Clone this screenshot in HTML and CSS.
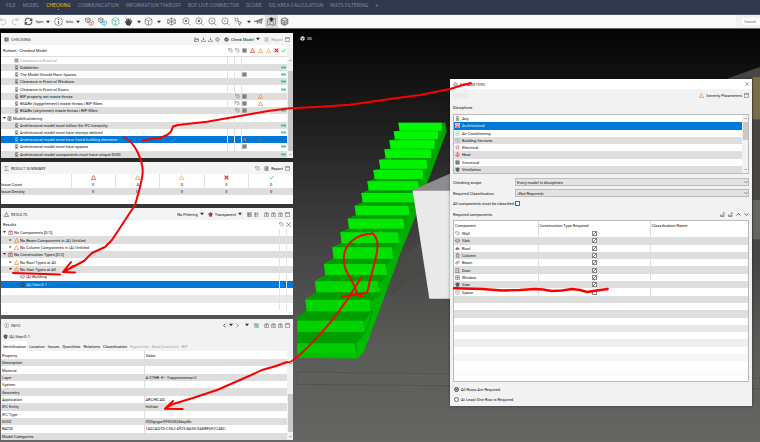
FILE: index.html
```html
<!DOCTYPE html>
<html lang="en">
<head>
<meta charset="utf-8">
<title>Model Checking</title>
<link rel="stylesheet" href="styles.css">
</head>
<body>
<svg class="defs" aria-hidden="true">
  <defs>
    <symbol id="undo" viewBox="0 0 16 16"><path d="M4 1v5h5M4 6c2-4 10-3 10 3 0 4-5 6-8 4"/></symbol>
    <symbol id="redo" viewBox="0 0 16 16"><path d="M12 1v5H7M12 6C10 2 2 3 2 9c0 4 5 6 8 4"/></symbol>
    <symbol id="spin" viewBox="0 0 16 16"><path d="M2 8c0-6 8-8 11-3M14 8c0 6-8 8-11 3M14 2v4h-4M2 14v-4h4" stroke-width="1.8"/></symbol>
    <symbol id="info" viewBox="0 0 16 16"><circle cx="8" cy="8" r="7"/><path d="M8 7v5M8 3.500v2" stroke-width="2"/></symbol>
    <symbol id="cube" viewBox="0 0 16 16"><path class="tint" d="M8 1l6 3v8l-6 3-6-3V4zM2 4l6 3 6-3M8 7v8"/></symbol>
    <symbol id="cubes" viewBox="0 0 16 16"><path d="M5 1l4 2v5L5 10 1 8V3zM1 3l4 2 4-2M5 5v5"/><path class="tint" d="M11 6l4 2v5l-4 2-4-2V8zM7 8l4 2 4-2M11 10v5"/></symbol>
    <symbol id="hand" viewBox="0 0 16 16"><path d="M5 14L2 8l3 1-1-6 3 5V2l2 6 2-5v6l3-3-2 6-2 3z" fill="#444" stroke="#333"/></symbol>
    <symbol id="section" viewBox="0 0 16 16"><path d="M1 5l7-3 7 3v6l-7 3-7-3zM1 5l7 3 7-3M8 1v14M1 11l7-3 7 3"/></symbol>
    <symbol id="zoom" viewBox="0 0 16 16"><circle cx="7" cy="7" r="5.500"/><path d="M11 11l4 4"/><path d="M7 5v4M5 7h4" stroke-width="2"/></symbol>
    <symbol id="zoomout" viewBox="0 0 16 16"><circle cx="7" cy="7" r="5.500"/><path d="M11 11l4 4M5 7h4"/></symbol>
    <symbol id="pick" viewBox="0 0 16 16"><path d="M2 2h5v5H2zM7 7l7 3-3 1-1 4z"/></symbol>
    <symbol id="plane" viewBox="0 0 16 16"><path d="M0 8l15-5-2 9-4-3-3 3V8zM6 8l9-5" fill="#aaa"/></symbol>
    <symbol id="map" viewBox="0 0 16 16"><path d="M1 4l4-2 6 2 4-2v11l-4 2-6-2-4 2zM5 2v11M11 4v11"/><path d="M8 9L5.500 5a2.800 2.800 0 1 1 5 0z" fill="#222"/></symbol>
    <symbol id="layers" viewBox="0 0 16 16"><path d="M2 4l6-3 6 3v8l-6 3-6-3zM2 4l6 3 6-3M2 7l6 3 6-3M2 10l6 3 6-3M8 7v8" fill="#bbb"/></symbol>
    <symbol id="caret" viewBox="0 0 10 10"><path d="M0 2h10L5 8z" fill="currentColor" stroke="none"/></symbol>
    <symbol id="right" viewBox="0 0 10 10"><path d="M2 1v8l6-4z" fill="currentColor" stroke="none"/></symbol>
    <symbol id="para" viewBox="0 0 16 16"><path d="M12 4c0-4-7-4-7-1s7 3 7 6-7 4-7 0M5 6c-2 4 6 5 6 8s-6 2-7-1" stroke-width="2.400"/></symbol>
    <symbol id="grid" viewBox="0 0 16 16"><path d="M2 2h12v12H2z" fill="#999"/><path d="M2 6h12M2 10h12M6 2v12" /></symbol>
    <symbol id="tag" viewBox="0 0 16 16"><path d="M2 2h5l7 8-4 4-8-7zM10 2l4 3" stroke-width="1.600"/></symbol>
    <symbol id="warn" viewBox="0 0 16 16"><path d="M8 1.500L14.500 14h-13zM3 14v1.500M13 14v1.500" stroke-width="2"/></symbol>
    <symbol id="cross" viewBox="0 0 16 16"><path d="M2 2l12 12M14 2L2 14" stroke-width="3.500"/></symbol>
    <symbol id="close" viewBox="0 0 16 16"><path d="M1 1l14 14M15 1L1 15" stroke-width="2"/></symbol>
    <symbol id="tick" viewBox="0 0 16 16"><path d="M1 8l5 5 9-10" stroke-width="2.400"/></symbol>
    <symbol id="pass" viewBox="0 0 16 10"><path d="M0 5l4-3v6zM16 5l-4-3v6zM4 5h8M7 2v6M10 2v6" fill="currentColor" stroke-width="2"/></symbol>
    <symbol id="window" viewBox="0 0 16 16"><path d="M1 2h14v12H1zM1 4h14" stroke-width="1.600"/></symbol>
    <symbol id="report" viewBox="0 0 16 16"><path d="M3 2h6v3h4v9H3zM5 8h6M5 11h6M14 1L9 7" stroke-width="2"/></symbol>
    <symbol id="folder" viewBox="0 0 16 16"><path d="M1 14V3h5l2 2h5v3M1 14l3-6h12l-3 6z" stroke-width="1.800"/></symbol>
    <symbol id="load" viewBox="0 0 16 16"><path d="M8 1v8M5 6l3 3 3-3M1 10v4h14v-4" stroke-width="1.800"/></symbol>
    <symbol id="gear" viewBox="0 0 16 16"><circle cx="8" cy="8" r="6"/><circle cx="8" cy="8" r="3"/><path d="M8 0v4M8 12v4M0 8h4M12 8h4M3 3l2 2M11 11l2 2M13 3l-2 2M5 11l-2 2"/></symbol>
    <symbol id="check" viewBox="0 0 16 16"><circle cx="8" cy="8" r="6.500" fill="#3d5878"/><path d="M4 8l3 3 5-6" stroke="#fff" stroke-width="2"/></symbol>
    <symbol id="sigma" viewBox="0 0 16 16"><path d="M13 4V1H2l6 7-6 7h11v-3" stroke-width="1.600"/></symbol>
    <symbol id="case" viewBox="0 0 16 16"><path d="M1 5h14v9H1zM5 5V2h6v3M8 7v5M5.500 9.500h5" stroke-width="1.500"/></symbol>
    <symbol id="tree" viewBox="0 0 16 16"><path d="M3 1v13h4M3 4h4M3 9h4M8 3h6M8 8h6M8 13h6" stroke-width="2"/></symbol>
    <symbol id="stair" viewBox="0 0 16 16"><path d="M8 1l3 3 4 1-2 4-1 5H5L4 10 1 6l4-2z" fill="#444"/><path d="M5 8h7M8 3v9" stroke="#999"/></symbol>
    <symbol id="orbit" viewBox="0 0 16 16"><path d="M8 1l6 3v8l-6 3-6-3V4z" fill="#eee"/><path d="M2 5l6 4 6-4M8 9v5" stroke="#111" stroke-width="2"/></symbol>
    <symbol id="house" viewBox="0 0 16 16"><path d="M1 8l7-6 7 6M3 7v7h10V7M7 14v-4h2v4" stroke-width="1.600"/></symbol>
    <symbol id="fan" viewBox="0 0 16 16"><path d="M1 3h14M1 8h14M1 13h14M4 1v14M11 1v14"/></symbol>
    <symbol id="flame" viewBox="0 0 16 16"><path d="M8 1c1 4 5 5 5 9s-9 6-10 1c0-3 3-3 5-10zM8 9v5" stroke-width="2"/></symbol>
    <symbol id="slab" viewBox="0 0 16 16"><path d="M1 7l7-4 7 4-7 4zM1 7v3l7 4 7-4V7" stroke-width="1.600"/></symbol>
    <symbol id="roof" viewBox="0 0 16 16"><path d="M1 11l5-7 4 2 5 5-5-1-3 2z" fill="#777"/></symbol>
    <symbol id="column" viewBox="0 0 16 16"><path d="M5 4v10h7V4zM5 4c0-3 7-3 7 0" stroke-width="1.600"/></symbol>
    <symbol id="beam" viewBox="0 0 16 16"><path d="M1 11l10-7 4 2-9 7-5-2zM3 7l6-1" stroke-width="1.600"/></symbol>
    <symbol id="door" viewBox="0 0 16 16"><path d="M3 15V1h9v14M1 15h14M10 7v3" stroke-width="1.600"/></symbol>
    <symbol id="pane" viewBox="0 0 16 16"><path d="M2 2h12v12H2zM8 2v12M2 8h12" stroke-width="1.600"/></symbol>
    <symbol id="rows" viewBox="0 0 16 16"><path d="M1 10h12v4H1z" stroke-width="2"/><path class="tint" d="M9 4h6M12 1v6" stroke-width="2.600"/></symbol>
    <symbol id="up" viewBox="0 0 16 16"><path d="M2 11l6-6 6 6" stroke-width="3"/></symbol>
    <symbol id="down" viewBox="0 0 16 16"><path d="M2 5l6 6 6-6" stroke-width="3"/></symbol>
    <symbol id="prev" viewBox="0 0 16 16"><path d="M11 2L5 8l6 6" stroke-width="3"/></symbol>
    <symbol id="next" viewBox="0 0 16 16"><path d="M5 2l6 6-6 6" stroke-width="2"/></symbol>
  </defs>
</svg>

<nav class="menu">
  <a href="#">FILE</a><a href="#">MODEL</a><a href="#" class="on">CHECKING</a><a href="#">COMMUNICATION</a><a href="#">INFORMATION TAKEOFF</a><a href="#">BCF LIVE CONNECTOR</a><a href="#">SCORE</a><a href="#">SIS AREA CALCULATION</a><a href="#">MATS FILTERING</a><a href="#">+</a>
</nav>

<div class="toolbar">
  <button class="dim" aria-label="Undo"><svg><use href="#undo"/></svg></button>
  <button class="dim" aria-label="Redo"><svg><use href="#redo"/></svg></button>
  <button class="wide"><svg><use href="#spin"/></svg>Spin<svg class="caret"><use href="#caret"/></svg></button>
  <button class="wide"><svg><use href="#info"/></svg>Info<svg class="caret"><use href="#caret"/></svg></button>
  <button class="t-red" aria-label="Hide"><svg><use href="#cubes"/></svg></button>
  <button class="t-blue" aria-label="Show"><svg><use href="#cubes"/></svg></button>
  <button class="t-teal" aria-label="Isolate"><svg><use href="#cube"/></svg></button>
  <button class="drop" aria-label="Pan"><svg><use href="#hand"/></svg><svg class="caret"><use href="#caret"/></svg></button>
  <button class="drop" aria-label="View"><svg><use href="#cube"/></svg><svg class="caret"><use href="#caret"/></svg></button>
  <button class="broad" aria-label="Section"><svg><use href="#section"/></svg></button>
  <button aria-label="Zoom window"><svg><use href="#zoom"/></svg></button>
  <button aria-label="Zoom in"><svg><use href="#zoom"/></svg></button>
  <button aria-label="Zoom out"><svg><use href="#zoomout"/></svg></button>
  <button aria-label="Zoom all"><svg><use href="#zoomout"/></svg></button>
  <button class="drop" aria-label="Select"><svg><use href="#pick"/></svg><svg class="caret"><use href="#caret"/></svg></button>
  <button aria-label="Plane"><svg><use href="#plane"/></svg></button>
  <button class="active" aria-label="Map"><svg><use href="#map"/></svg></button>
  <button aria-label="Layers"><svg><use href="#layers"/></svg></button>
  <div class="search"><input type="text" placeholder="Search" aria-label="Search"></div>
</div>

<main class="workspace">
  <div class="side">
    <section class="panel">
      <header class="bar"><svg><use href="#grid"/></svg><h2>CHECKING</h2>
        <div class="tools"><svg><use href="#folder"/></svg><svg><use href="#load"/></svg><svg><use href="#load"/></svg><svg><use href="#gear"/></svg><button><svg><use href="#check"/></svg>Check Model <svg class="caret"><use href="#caret"/></svg></button><button class="dim"><svg><use href="#report"/></svg>Report</button><svg><use href="#window"/></svg></div>
      </header>
      <div class="scroller">
        <table class="rules">
          <thead><tr><th>Ruleset - Checked Model</th><th class="c7"><svg><use href="#tag"/></svg></th><th class="c7"><svg><use href="#tag"/></svg></th><th class="c7"><svg><use href="#grid"/></svg></th><th class="c8 red"><svg><use href="#warn"/></svg></th><th class="c8 orange"><svg><use href="#warn"/></svg></th><th class="c8 amber"><svg><use href="#warn"/></svg></th><th class="c8 red"><svg><use href="#cross"/></svg></th><th class="c7 green"><svg><use href="#tick"/></svg></th></tr></thead>
          <tbody>
            <tr class="faint"><td><svg><use href="#grid"/></svg>Clearance in Front of</td><td></td><td></td><td></td><td></td><td></td><td></td><td></td><td></td></tr>
            <tr><td><svg><use href="#para"/></svg>Dubbletter</td><td></td><td></td><td></td><td></td><td></td><td></td><td></td><td class="green"><svg><use href="#pass"/></svg></td></tr>
            <tr><td><svg><use href="#para"/></svg>The Model Should Have Spaces</td><td></td><td></td><td><svg><use href="#grid"/></svg></td><td></td><td></td><td></td><td></td><td class="green"><svg><use href="#pass"/></svg></td></tr>
            <tr><td><svg><use href="#para"/></svg>Clearance in Front of Windows</td><td></td><td></td><td></td><td></td><td></td><td></td><td></td><td class="green"><svg><use href="#pass"/></svg></td></tr>
            <tr><td><svg><use href="#para"/></svg>Clearance in Front of Doors</td><td></td><td></td><td></td><td></td><td></td><td></td><td></td><td class="green"><svg><use href="#pass"/></svg></td></tr>
            <tr><td><svg><use href="#para"/></svg>BIP property set måste finnas</td><td></td><td><svg><use href="#tag"/></svg></td><td><svg><use href="#grid"/></svg></td><td></td><td class="orange"><svg><use href="#warn"/></svg></td><td></td><td></td><td></td></tr>
            <tr><td><svg><use href="#para"/></svg>BSABe (byggelement) måste finnas i BIP-fliken</td><td></td><td><svg><use href="#tag"/></svg></td><td><svg><use href="#grid"/></svg></td><td></td><td class="orange"><svg><use href="#warn"/></svg></td><td></td><td></td><td></td></tr>
            <tr><td><svg><use href="#para"/></svg>BSABs (utrymmen) måste finnas i BIP-fliken</td><td></td><td><svg><use href="#tag"/></svg></td><td><svg><use href="#grid"/></svg></td><td></td><td></td><td></td><td></td><td class="green"><svg><use href="#pass"/></svg></td></tr>
            <tr class="group"><td><svg class="caret"><use href="#caret"/></svg><svg><use href="#report"/></svg>Modellvalidering</td><td></td><td></td><td></td><td></td><td></td><td></td><td></td><td></td></tr>
            <tr><td><svg><use href="#para"/></svg>Architectural model must follow the IFC hierarchy</td><td></td><td></td><td></td><td></td><td></td><td></td><td></td><td class="green"><svg><use href="#pass"/></svg></td></tr>
            <tr><td><svg><use href="#para"/></svg>Architectural model must have storeys defined</td><td></td><td></td><td></td><td></td><td></td><td></td><td></td><td class="green"><svg><use href="#pass"/></svg></td></tr>
            <tr class="sel"><td><svg><use href="#para"/></svg>Architectural model must have listed building elements</td><td></td><td></td><td><svg class="ink"><use href="#grid"/></svg></td><td></td><td class="brown"><svg><use href="#warn"/></svg></td><td></td><td></td><td></td></tr>
            <tr><td><svg><use href="#para"/></svg>Architectural model must have spaces</td><td></td><td></td><td><svg><use href="#grid"/></svg></td><td></td><td></td><td></td><td></td><td class="green"><svg><use href="#pass"/></svg></td></tr>
            <tr><td><svg><use href="#para"/></svg>Architectural model components must have unique GUID</td><td></td><td></td><td></td><td></td><td></td><td></td><td></td><td class="green"><svg><use href="#pass"/></svg></td></tr>
          </tbody>
        </table>
        <div class="track"><svg><use href="#up"/></svg><i class="thumb"></i><svg><use href="#down"/></svg></div>
      </div>
    </section>

    <section class="panel">
      <header class="bar"><svg><use href="#sigma"/></svg><h2>RESULT SUMMARY</h2>
        <div class="tools"><svg><use href="#tag"/></svg><button><svg><use href="#report"/></svg>Report</button><svg><use href="#window"/></svg></div>
      </header>
      <table class="summary">
        <thead><tr><th></th><th class="red"><svg><use href="#warn"/></svg></th><th class="orange"><svg><use href="#warn"/></svg></th><th class="amber"><svg><use href="#warn"/></svg></th><th class="red"><svg><use href="#cross"/></svg></th><th class="green"><svg><use href="#tick"/></svg></th></tr></thead>
        <tbody>
          <tr><td>Issue Count</td><td>0</td><td>4</td><td>0</td><td>0</td><td>0</td></tr>
          <tr><td>Issue Density</td><td>0</td><td>18</td><td>0</td><td>0</td><td>0</td></tr>
        </tbody>
      </table>
    </section>

    <section class="panel">
      <header class="bar"><svg><use href="#warn"/></svg><h2>RESULTS</h2>
        <div class="tools"><button>No Filtering <svg class="caret"><use href="#caret"/></svg></button><button><svg class="red"><use href="#stair"/></svg>Transparent <svg class="caret"><use href="#caret"/></svg></button><svg class="lit gapped"><use href="#tree"/></svg><svg><use href="#tree"/></svg><svg class="gapped"><use href="#case"/></svg><svg><use href="#case"/></svg><svg><use href="#case"/></svg><svg><use href="#window"/></svg></div>
      </header>
      <table class="results">
        <thead><tr><th>Results</th><th class="c7"><svg><use href="#tag"/></svg></th><th class="c7"><svg><use href="#close"/></svg></th></tr></thead>
        <tbody>
          <tr><td class="l0"><svg class="caret"><use href="#caret"/></svg><svg class="maroon"><use href="#case"/></svg>No Components [0/2]</td><td></td><td></td></tr>
          <tr><td class="l1"><svg class="caret"><use href="#right"/></svg><svg class="orange"><use href="#warn"/></svg>No Beam Components in (A) Untitled</td><td></td><td></td></tr>
          <tr><td class="l1"><svg class="caret"><use href="#right"/></svg><svg class="orange"><use href="#warn"/></svg>No Column Components in (A) Untitled</td><td></td><td></td></tr>
          <tr><td class="l0"><svg class="caret"><use href="#caret"/></svg><svg class="maroon"><use href="#case"/></svg>No Construction Types [0/2]</td><td></td><td></td></tr>
          <tr><td class="l1"><svg class="caret"><use href="#right"/></svg><svg class="orange"><use href="#warn"/></svg>No Roof Types at All</td><td></td><td></td></tr>
          <tr><td class="l1"><svg class="caret"><use href="#caret"/></svg><svg class="orange"><use href="#warn"/></svg>No Stair Types at All</td><td></td><td></td></tr>
          <tr><td class="l2"><svg><use href="#slab"/></svg>(A) Building</td><td></td><td></td></tr>
          <tr class="sel"><td class="l2"><svg class="ink"><use href="#stair"/></svg>(A) Stair.0.1</td><td></td><td></td></tr>
          <tr><td></td><td></td><td></td></tr>
          <tr class="pale"><td></td><td></td><td></td></tr>
          <tr><td></td><td></td><td></td></tr>
        </tbody>
      </table>
    </section>

    <section class="panel">
      <header class="bar plain"><svg><use href="#info"/></svg><h2>INFO</h2>
        <div class="tools"><svg><use href="#prev"/></svg><svg class="caret"><use href="#caret"/></svg><svg><use href="#next"/></svg><svg class="caret gapped"><use href="#caret"/></svg><svg class="green lit gapped"><use href="#cubes"/></svg><svg class="gapped"><use href="#case"/></svg><svg><use href="#case"/></svg><svg><use href="#case"/></svg><svg><use href="#window"/></svg></div>
      </header>
      <div class="subject"><svg><use href="#stair"/></svg>(A) Stair.0.1</div>
      <div class="tabs"><button class="on">Identification</button><button>Location</button><button>Issues</button><button>Quantities</button><button>Relations</button><button>Classification</button><button disabled>Hyperlinks</button><button disabled>BaseQuantities</button><button disabled>BIP</button></div>
      <div class="scroller">
        <table class="props">
          <thead><tr><th>Property</th><th>Value</th></tr></thead>
          <tbody>
            <tr><td>Description</td><td></td></tr>
            <tr><td>Material</td><td></td></tr>
            <tr><td>Layer</td><td>A-27HB--E-- Trappstommar.U</td></tr>
            <tr><td>System</td><td></td></tr>
            <tr><td>Geometry</td><td></td></tr>
            <tr><td>Application</td><td>ARCHICAD</td></tr>
            <tr><td>IFC Entity</td><td>IfcStair</td></tr>
            <tr><td>IFC Type</td><td></td></tr>
            <tr><td>GUID</td><td>0Q0grqpc999OfG2kbiydhi</td></tr>
            <tr><td>BATID</td><td>1A02AD7D-C062-4925-8A50-0AEBF6F2CAEC</td></tr>
            <tr><td>Model Categories</td><td></td></tr>
          </tbody>
        </table>
        <div class="track low"><svg><use href="#up"/></svg><i class="thumb"></i><svg><use href="#down"/></svg></div>
      </div>
    </section>
  </div>

  <section class="view">
    <svg class="scene" viewBox="21 -243 1389 1239" preserveAspectRatio="xMinYMin slice" aria-hidden="true">
      <defs>
        <linearGradient id="face" gradientUnits="userSpaceOnUse" x1="0" y1="38" x2="0" y2="740"><stop offset="0" stop-color="#00fc00"/><stop offset="1" stop-color="#00cc00"/></linearGradient>
        <linearGradient id="flank" gradientUnits="userSpaceOnUse" x1="0" y1="38" x2="0" y2="740"><stop offset="0" stop-color="#00a000"/><stop offset="1" stop-color="#00be00"/></linearGradient>
      </defs>
      <path d="M320 455L390 400 410 470 300 560z" fill="#4b4946"/>
      <path d="M22 786L1410 804V836L22 823z" fill="#5f5f5d" stroke="#545452" stroke-width="3"/>
      <path d="M1300-90L1410-129V430H1385L1380 100z" fill="#484746"/>
      <path d="M1388-99h22V28h-22z" fill="#7a7048"/>
      <path d="M1388 270h22v118h-22z" fill="#656563"/>
      <path d="M325 38L466 38 470 65 413 215 385 300 335 420 222 725 203 746 22 743V620L50 604 46 569 79 547 75 514 106 495 102 462 131 446 127 412 155 399 151 367 177 356 173 326 198 316 194 287 218 277 214 249 236 241 232 214 254 207 250 180 271 176 267 149 287 144 283 118 302 116 298 91 315 88 311 64 329 62z" fill="url(#flank)"/>
      <g fill="#009c00">
        <path d="M329 62H456L444 68H311zM315 88H446L434 95H298zM302 116H436L422 122H283zM287 144H424L410 153H267zM271 176H412L398 184H250zM254 207H400L384 218H232zM236 241H388L371 254H214zM218 277H373L356 292H194zM198 316H358L340 332H173zM177 356H343L324 373H151zM155 399H327L305 418H127zM131 446H309L286 468H102zM106 495H291L265 520H75zM79 547H270L243 575H46zM50 604H247L220 637H22V620zM22 665H224L195 705H22z"/>
      </g>
      <g fill="url(#face)">
        <path d="M325 38H455V62H329zM311 64H444V88H315zM298 91H434V116H302zM283 118H422L424 144H287zM267 149H410L412 176H271zM250 180H398L400 207H254zM232 214H384L388 241H236zM214 249H371L373 277H218zM194 287H356L358 316H198zM173 326H340L343 356H177zM151 367H324L327 399H155zM127 412H305L309 446H131zM102 462H286L291 495H106zM75 514H265L270 547H79zM46 569H243L247 604H50zM22 632H220L224 665H22zM22 700H195L203 730H22z"/>
      </g>
      <path d="M195 698L224 672 247 611 240 575 270 554 265 520 291 500M195 698L203 740" fill="none" stroke="#008200" stroke-width="2"/>
      <path d="M368 240L520 173V260H368z" fill="#8e8c90"/>
      <path d="M368 242H560V566H418L400 450z" fill="#e9e9ea"/>
    </svg>
    <h2 class="viewname"><svg><use href="#orbit"/></svg>3D</h2>
  </section>

  <section class="dialog" role="dialog" aria-labelledby="dlg">
    <header class="dtitle"><svg><use href="#gear"/></svg><h2 id="dlg">PARAMETERS</h2><button aria-label="Close"><svg><use href="#close"/></svg></button></header>
    <div class="dbody">
      <div class="drow"><i class="ghost"></i><button><svg class="orange"><use href="#warn"/></svg>Severity Parameters <svg><use href="#window"/></svg></button></div>
      <h3 class="first">Disciplines</h3>
      <div class="listbox">
        <ul>
          <li><svg><use href="#para"/></svg>Any</li>
          <li class="sel"><svg class="red"><use href="#house"/></svg>Architectural</li>
          <li><svg class="green"><use href="#fan"/></svg>Air Conditioning</li>
          <li><svg class="blue"><use href="#cube"/></svg>Building Services</li>
          <li><svg class="red"><use href="#fan"/></svg>Electrical</li>
          <li><svg class="red"><use href="#flame"/></svg>Heat</li>
          <li><svg><use href="#grid"/></svg>Structural</li>
          <li><svg class="green"><use href="#stair"/></svg>Ventilation</li>
        </ul>
        <div class="track boxed"><svg><use href="#up"/></svg><i class="thumb"></i><svg><use href="#down"/></svg></div>
      </div>
      <div class="form">
        <label for="scope">Checking scope</label>
        <div class="pick"><select id="scope"><option>Every model in disciplines</option></select><svg><use href="#down"/></svg></div>
        <label for="cls">Required Classification</label>
        <div class="pick"><select id="cls"><option>&lt;Not Required&gt;</option></select><svg><use href="#down"/></svg></div>
        <label for="all">All components must be classified</label>
        <input type="checkbox" id="all">
      </div>
      <div class="drow"><h3>Required components</h3><div class="tools"><svg class="t-teal"><use href="#rows"/></svg><svg class="t-red"><use href="#rows"/></svg><svg><use href="#up"/></svg><svg><use href="#down"/></svg></div></div>
      <div class="sheet">
        <table class="comps">
          <thead><tr><th>Component</th><th>Construction Type Required</th><th>Classification Name</th></tr></thead>
          <tbody>
            <tr><td><svg><use href="#tag"/></svg>Wall</td><td><input type="checkbox" checked aria-label="Wall"></td><td></td></tr>
            <tr><td><svg><use href="#slab"/></svg>Slab</td><td><input type="checkbox" checked aria-label="Slab"></td><td></td></tr>
            <tr><td><svg><use href="#roof"/></svg>Roof</td><td><input type="checkbox" checked aria-label="Roof"></td><td></td></tr>
            <tr><td><svg><use href="#column"/></svg>Column</td><td><input type="checkbox" checked aria-label="Column"></td><td></td></tr>
            <tr><td><svg><use href="#beam"/></svg>Beam</td><td><input type="checkbox" checked aria-label="Beam"></td><td></td></tr>
            <tr><td><svg><use href="#door"/></svg>Door</td><td><input type="checkbox" checked aria-label="Door"></td><td></td></tr>
            <tr><td><svg><use href="#pane"/></svg>Window</td><td><input type="checkbox" checked aria-label="Window"></td><td></td></tr>
            <tr><td><svg><use href="#stair"/></svg>Stair</td><td><input type="checkbox" checked aria-label="Stair"></td><td></td></tr>
            <tr><td><svg><use href="#cube"/></svg>Space</td><td><input type="checkbox" aria-label="Space"></td><td></td></tr>
            <tr class="e1"><td colspan="3"></td></tr><tr><td colspan="3"></td></tr>
            <tr class="e2"><td colspan="3"></td></tr><tr><td colspan="3"></td></tr>
            <tr class="e3"><td colspan="3"></td></tr><tr><td colspan="3"></td></tr>
            <tr class="e4"><td colspan="3"></td></tr><tr><td colspan="3"></td></tr>
            <tr class="e5"><td colspan="3"></td></tr><tr><td colspan="3"></td></tr>
            <tr class="e6"><td colspan="3"></td></tr>
          </tbody>
        </table>
      </div>
      <div class="radios">
        <label><input type="radio" name="req" checked>All Rows Are Required</label>
        <label><input type="radio" name="req">At Least One Row is Required</label>
      </div>
    </div>
  </section>
</main>

<svg class="ink-layer" viewBox="0 0 760 442" preserveAspectRatio="xMinYMin meet" aria-hidden="true">
  <path d="M471 83L463 85 450 89 420 95 390 99 350 104.700 317 107 290 108.300 268 111 247 114.700 207 121.700 178 125 173 126.500 171 131.700 167 135 160 138 151 139 143 140.700"/>
  <path d="M124 137Q133 142 138 153T142.700 172 135 205L112 240 105 247 92 253 84 261 64 271.500M71 262L63 272 75 272.500M66 271L73 266M13 273Q36 273.500 60 274.500"/>
  <path d="M342 296.700L367 292.700 372 273 376 256.700Q379 244 376 238T371 233.700Q361 234 353 240T344 256 348 274 358 295L362 297"/>
  <path d="M361 278L347 300Q330 325 310 345T287 362Q275 367 263 369.700L240 380 217 390 193 398 173 404 165 408.700 182.700 409M173 401L165 408.700"/>
  <path d="M454 288.300L482 289 502 290.500 520 290 535 289 543 289.500 552 291 562 290.500 572 289 580 290 587 292 595 290.700 607.700 289" stroke-width="2.400"/>
</svg>
</body>
</html>
```

FILE: styles.css
```css
* { box-sizing: border-box; }
body {
  margin: 0;
  min-height: 100vh;
  position: relative;
  display: flex;
  flex-direction: column;
  overflow: hidden;
  font: 4px/7px Roboto, "Open Sans", sans-serif;
  color: #111;
}
h2, h3, ul { margin: 0; padding: 0; font: inherit; list-style: none; }
button, input, select { font: inherit; color: inherit; margin: 0; padding: 0; border: 0; background: none; }
svg { width: 5px; height: 5px; flex: none; fill: none; stroke: #555; stroke-width: 1; vertical-align: -1px; color: #333; }
svg.caret { width: 4px; height: 4px; vertical-align: 0; }
.defs { position: absolute; width: 0; height: 0; }

.red svg, svg.red { stroke: #e51c14; color: #e51c14; }
.orange svg, svg.orange { stroke: #f5821f; color: #f5821f; }
.amber svg, svg.amber { stroke: #f5a53c; color: #f5a53c; }
.green svg, svg.green { stroke: #1ec28c; color: #1ec28c; }
.brown svg { stroke: #96663c; }
.maroon { stroke: #8c2c2c; }
svg.blue { stroke: #3c9ac8; }
.t-red { --tint: #d9503c; }
.t-blue { --tint: #1ba0d8; }
.t-teal { --tint: #1fae96; }
.tint { stroke: var(--tint, inherit); }
.dim { color: #999; }
.dim svg { stroke: #aaa; }

.menu { display: flex; gap: 7px; height: 15px; padding: 2px 6px 0; background: #2f384d; border-bottom: 1px solid #4b5470; font-size: 5px; }
.menu a { color: #7d8798; text-decoration: none; position: relative; }
.menu .on { color: #e5b823; }
.menu .on::after { content: ""; position: absolute; left: 50%; top: 7px; width: 1px; height: 1px; background: #e5b823; }

.toolbar { display: flex; align-items: center; height: 14px; padding-left: 9px; margin-left: -13px; background: #f9f9f9; border-bottom: 1px solid #666b66; }
.toolbar button { display: flex; align-items: center; justify-content: center; width: 13px; height: 13px; flex: none; }
.toolbar svg { width: 9px; height: 9px; }
.toolbar svg.caret { width: 4px; height: 4px; }
.toolbar .wide { width: 30px; gap: 3px; }
.toolbar .wide + .t-red { margin-left: 1px; }
.toolbar .drop { width: 20px; gap: 4px; }
.toolbar .broad { width: 18px; }
.toolbar .active { background: #dedee2; }
.search { margin-left: auto; align-self: stretch; padding: 3px 0 3px 6px; background: #f1f1f1; display: flex; }
.search input { width: 18px; padding-left: 2px; background: #fff; border-radius: 2px; color: #666; }

.workspace {
  flex: 1;
  position: relative;
  display: grid;
  grid-template-columns: 293px 1fr;
  gap: 4px;
  background: linear-gradient(#040404, #1b1b1b 20%, #454545 54%, #595957 75%, #656563);
}
.side { display: flex; flex-direction: column; gap: 4px; padding: 4px 0 1px 1px; }
.panel { background: #fff; }
.bar { display: flex; align-items: center; gap: 2px; height: 12px; padding: 0 3px; background: #f4f4f4; }
.bar h2, .dtitle h2 { font-family: "Open Sans", sans-serif; }
.tools { margin-left: auto; display: flex; align-items: center; gap: 2px; }
.tools button { display: flex; align-items: center; gap: 2px; padding-left: 2px; }
.tools .gapped { margin-left: 3px; }
.lit { background: #ccc; }
.scroller { display: flex; }
table { width: 100%; border-collapse: collapse; table-layout: fixed; }
tbody tr { height: 7px; }
th, td { padding: 0; font-weight: 400; text-align: left; white-space: nowrap; overflow: hidden; }
tbody tr:nth-child(even) { background: #dedede; }
tbody tr.sel, li.sel { background: #0078d7; color: #e6f2fd; }
tr.sel svg { stroke: #9cc8ee; }
tr.sel .ink { stroke: #333; }
tr.sel .brown svg { stroke: #96663c; }
.track { width: 6px; flex: none; display: flex; flex-direction: column; align-items: center; justify-content: space-between; background: #f1f1f1; }
.track svg { width: 3px; margin: 1px 0; }
.thumb { width: 5px; background: #c9c9c9; }

.c7 { width: 7px; }
.c8 { width: 8px; }
.rules { height: 113px; }
.rules thead tr { height: 11px; border-bottom: 1px solid #ddd; }
.rules th:first-child { padding-left: 2px; }
.rules th + th, .rules td + td { text-align: center; }
.rules td:first-child { padding-left: 13px; }
.rules td:first-child svg { margin-right: 1px; }
.rules .group td:first-child { padding-left: 2px; }
.group svg.caret, .results svg.caret { margin-right: 2px; width: 3px; }
.rules td:nth-child(2), .rules td:nth-child(3), .rules td:nth-child(4) { border-left: 1px solid #e2e2e2; }
.faint { color: #999; }
.faint svg { stroke: #bbb; }
.scroller .track { padding-top: 12px; }
.rules + .track .thumb { flex: 1; margin: 7px 0 0; }

.summary { margin-bottom: 9px; }
.summary thead tr { height: 7px; }
.summary th:first-child { width: 70px; }
.summary td + td, .summary th + th { text-align: center; border-left: 1px solid #e0e0e0; }

.results { height: 90px; margin-bottom: 5px; }
.results thead tr { height: 9px; }
.results th:first-child { padding-left: 2px; }
.results td + td { border-left: 1px solid #e4e4e4; }
.results td svg { margin-right: 1px; }
.results .l0 { padding-left: 2px; }
.results .l1 { padding-left: 8px; }
.results .l2 { padding-left: 19px; }
tbody tr.pale { background: #e8e8e8; }

.plain, .subject, .tabs { background: #f2f2f2; }
.subject { display: flex; align-items: center; gap: 1px; height: 10px; padding-left: 2px; }
.tabs { display: flex; height: 10px; gap: 1px; padding-left: 1px; }
.tabs button { padding: 0 1px; }
.tabs .on { background: #fff; }
.tabs button:disabled { color: #aaa; }
.props { height: 89px; }
.props thead tr { height: 8px; }
.props tbody tr:nth-child(odd) { background: #dedede; }
.props tbody tr:nth-child(even) { background: #fff; }
.props th, .props td { padding-left: 1px; }
.props td + td, .props th + th { border-left: 1px solid #ddd; }
.scroller .low { padding-top: 9px; }
.low .thumb { height: 38px; margin-top: auto; margin-bottom: 1px; }

.view { position: relative; overflow: hidden; }
.scene { position: absolute; left: 0; top: 0; width: 100%; height: 100%; stroke: none; }
.viewname { position: relative; display: flex; align-items: center; gap: 2px; padding: 6px 3px; color: #eee; }
.viewname svg { stroke: #eee; }

.dialog { position: absolute; right: 8px; top: 50px; width: 302px; background: #f2f2f2; box-shadow: 0 0 3px #0006; }
.dtitle { display: flex; align-items: center; gap: 2px; height: 10px; padding: 0 3px; background: #fff; }
.dtitle button { margin-left: auto; display: flex; }
.dtitle button svg { width: 4px; height: 4px; }
.dbody { padding: 3px 3px 1px; display: flex; flex-direction: column; }
.drow { display: flex; align-items: center; justify-content: space-between; height: 7px; }
.drow button { display: flex; align-items: center; gap: 2px; }
.drow .tools { gap: 3px; }
.ghost { width: 16px; height: 5px; background: #ebebeb; }
.first { margin: 5px 0 3px; }
.listbox { display: flex; border: 1px solid #bbb; background: #fff; height: 60px; }
.listbox ul { flex: 1; display: grid; grid-auto-rows: 1fr; }
.listbox li { padding-left: 1px; line-height: 7px; }
.listbox li svg { margin-right: 2px; }
.listbox li:nth-child(even):not(.sel) { background: #dedede; }
.sel svg.red { background: #f4d4d0; }
.boxed .thumb { height: 18px; margin-bottom: auto; }
.form { display: grid; grid-template-columns: 60px 1fr; gap: 3px 2px; align-items: center; padding: 4px 0; white-space: nowrap; }
.pick { position: relative; display: flex; }
.pick select { flex: 1; height: 8px; appearance: none; background: #e3e3e3; border: 1px solid #bbb; padding-left: 1px; }
.pick svg { position: absolute; right: 1px; top: 2px; width: 4px; height: 4px; }
input[type="checkbox"], input[type="radio"] { appearance: none; width: 5px; height: 5px; border: 1px solid #666; background: #fff; display: block; }
input[type="radio"] { border-radius: 50%; }
input[type="radio"]:checked { background: #333; box-shadow: inset 0 0 0 1px #bbb; }
td input[type="checkbox"] { border-color: #888; }
td input[type="checkbox"]:checked { background: #fff linear-gradient(135deg, transparent 45%, #777 45%, #777 60%, transparent 60%); }
.sheet { margin-top: 2px; min-height: 162px; border: 1px solid #bbb; background: #fff; }
.comps { height: 155px; }
.comps thead tr { height: 9px; }
.comps th:first-child { width: 84px; }
.comps th:nth-child(2) { width: 112px; }
.comps th { padding-left: 1px; }
.comps td:first-child { padding-left: 1px; }
.comps td:first-child svg { margin-right: 2px; }
.comps td + td, .comps th + th { border-left: 1px solid #ddd; }
.comps td input { margin: 0 auto; }
tbody tr.e3 { background: #e8e8e8; }
tbody tr.e4 { background: #efefef; }
tbody tr.e5 { background: #f5f5f5; }
tbody tr.e6 { background: #fbfbfb; }
.radios { display: flex; flex-direction: column; gap: 3px; padding: 4px 1px 2px; }
.radios label { display: flex; align-items: center; gap: 2px; }

.ink-layer { position: absolute; left: 0; top: 0; width: 760px; height: 442px; pointer-events: none; stroke: #fb0000; stroke-width: 2; stroke-linecap: round; stroke-linejoin: round; }
```
